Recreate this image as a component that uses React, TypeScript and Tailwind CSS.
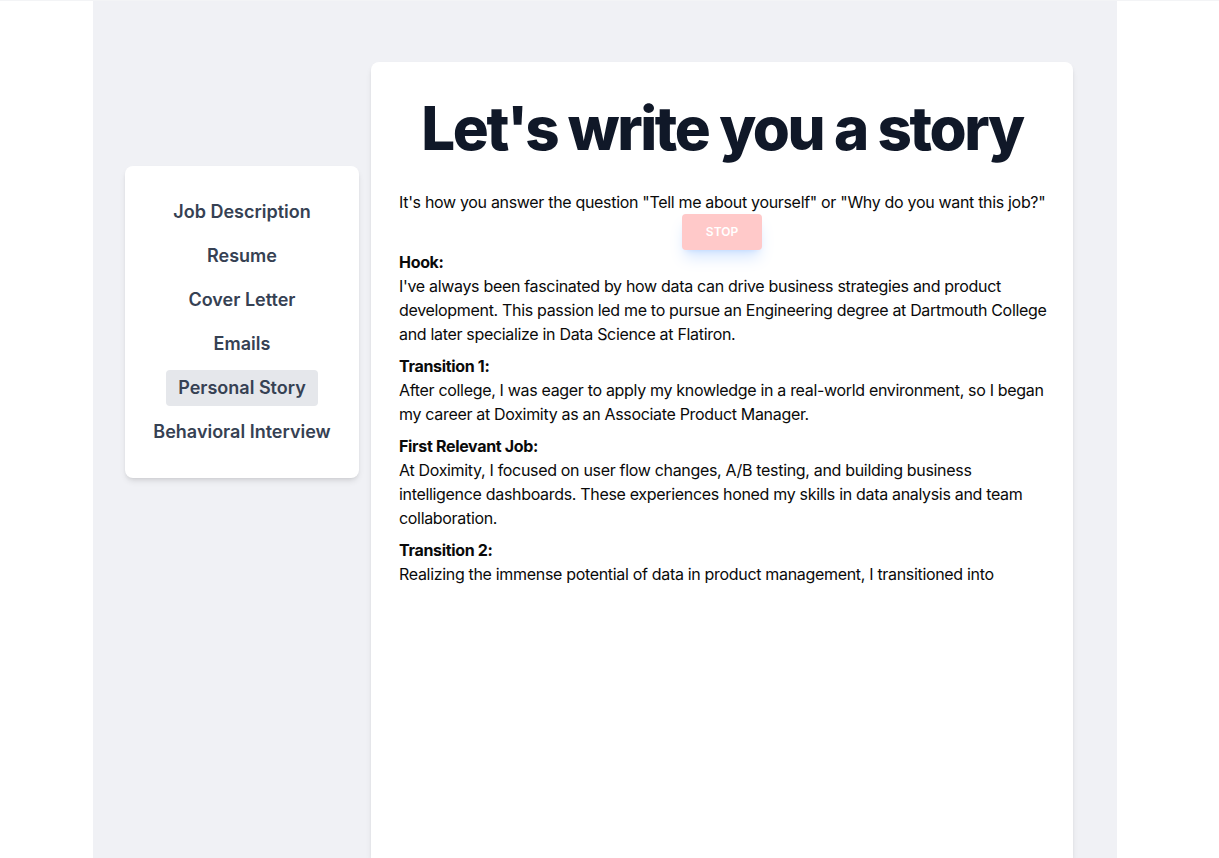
import React from "react";

const navItems = [
  "Job Description",
  "Resume",
  "Cover Letter",
  "Emails",
  "Personal Story",
  "Behavioral Interview",
];

const sections = [
  {
    label: "Hook:",
    text: "I've always been fascinated by how data can drive business strategies and product development. This passion led me to pursue an Engineering degree at Dartmouth College and later specialize in Data Science at Flatiron.",
  },
  {
    label: "Transition 1:",
    text: "After college, I was eager to apply my knowledge in a real-world environment, so I began my career at Doximity as an Associate Product Manager.",
  },
  {
    label: "First Relevant Job:",
    text: "At Doximity, I focused on user flow changes, A/B testing, and building business intelligence dashboards. These experiences honed my skills in data analysis and team collaboration.",
  },
  {
    label: "Transition 2:",
    text: "Realizing the immense potential of data in product management, I transitioned into",
  },
];

export default function App() {
  return (
    <div className="min-h-[858px] bg-white border-t border-gray-100 font-['Inter',sans-serif]">
      <div className="ml-[93px] w-[1024px] min-h-[857px] bg-[#f0f1f5] flex items-start pl-8">
        {/* Sidebar */}
        <aside className="mt-[165px] w-[234px] shrink-0 bg-white rounded-lg shadow-md px-4 py-7">
          <nav className="flex flex-col items-center gap-2">
            {navItems.map((item) => (
              <span
                key={item}
                className={
                  item === "Personal Story"
                    ? "px-3 py-1 rounded bg-gray-200 text-lg leading-7 font-semibold text-gray-700"
                    : "px-3 py-1 rounded text-lg leading-7 font-semibold text-gray-700"
                }
              >
                {item}
              </span>
            ))}
          </nav>
        </aside>

        {/* Main card */}
        <main className="ml-3 mt-[61px] w-[702px] min-h-[796px] bg-white rounded-t-lg shadow-md pl-7 pr-5 pt-9">
          <h1 className="pr-2 text-6xl leading-none font-extrabold text-gray-900 text-center tracking-[-0.04em]">
            Let's write you a story
          </h1>
          <p className="mt-8 text-base leading-6 text-[#0a0a0a] tracking-[-0.02em] whitespace-nowrap">
            It's how you answer the question "Tell me about yourself" or "Why do you want this job?"
          </p>
          <div className="flex justify-center pr-2">
            <button className="w-20 h-9 rounded bg-red-200 text-white text-xs font-semibold uppercase shadow-lg shadow-blue-500/20">
              Stop
            </button>
          </div>
          <div className="text-base leading-6 text-[#0a0a0a] tracking-[-0.02em]">
            {sections.map((s) => (
              <div key={s.label} className="mb-2">
                <p className="font-bold">{s.label}</p>
                <p>{s.text}</p>
              </div>
            ))}
          </div>
        </main>
      </div>
    </div>
  );
}
